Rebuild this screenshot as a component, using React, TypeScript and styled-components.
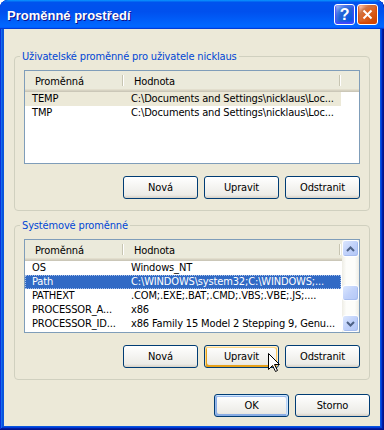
import styled, { createGlobalStyle, css } from 'styled-components';

const GlobalStyle = createGlobalStyle`
  html, body {
    margin: 0;
    padding: 0;
    background: #ffffff;
  }
  body {
    font-family: "DejaVu Sans Condensed", "DejaVu Sans", "Liberation Sans", sans-serif;
    font-stretch: condensed;
    font-size: 11px;
    letter-spacing: -0.15px;
    color: #000;
  }
  * {
    box-sizing: border-box;
  }
`;

const Window = styled.div`
  width: 384px;
  height: 430px;
  display: flex;
  flex-direction: column;
  background: #0855dd;
  border-radius: 8px 8px 0 0;
  box-shadow: inset -1px -1px #00138c, inset 1px 1px #0831d9, inset -2px -2px #001ea0,
    inset 2px 2px #166aee, inset -3px -3px #003bda, inset 3px 3px #0855dd;
  overflow: hidden;
`;

const TitleBar = styled.div`
  height: 29px;
  flex: none;
  display: flex;
  align-items: center;
  gap: 2px;
  padding: 0 6px 0 7px;
  border-radius: 8px 8px 0 0;
  background: linear-gradient(180deg, #0997ff, #0053ee 8%, #0050ee 40%, #06f 88%, #06f 93%, #005bff 95%, #003dd7 96%, #003dd7);
`;

const Title = styled.span`
  flex: 1;
  color: #fff;
  font-family: "Liberation Sans", Arial, sans-serif;
  font-stretch: normal;
  letter-spacing: 0;
  font-weight: bold;
  font-size: 13px;
  text-shadow: 1px 1px #0f1089;
  padding-top: 1px;
`;

const CaptionButton = styled.div<{ $kind: 'help' | 'close' }>`
  width: 21px;
  height: 21px;
  border: 1px solid #fff;
  border-radius: 3px;
  display: flex;
  align-items: center;
  justify-content: center;
  color: #fff;
  font-family: "Liberation Sans", Arial, sans-serif;
  font-weight: bold;
  font-size: 16px;
  ${(p) =>
    p.$kind === 'help'
      ? css`
          background: radial-gradient(circle at 90% 90%, #0054e9 0%, #2263d5 55%, #4479e4 70%, #a3bbec 90%, #fff 100%);
          box-shadow: inset 0 -1px 2px 1px #4646ff;
        `
      : css`
          background: radial-gradient(circle at 90% 90%, #cc4600 0%, #dc6527 55%, #cd7546 70%, #ffccb2 90%, #fff 100%);
          box-shadow: inset 0 -1px 2px 1px #da4600;
        `}
`;

const Body = styled.div`
  flex: 1;
  margin: 0 4px 4px;
  background: #ece9d8;
  padding: 21px 10px 0;
  display: flex;
  flex-direction: column;
`;

const Group = styled.fieldset`
  margin: 0;
  min-width: 0;
  padding: 7px 9px 11px;
  border: 1px solid #d0d0bf;
  border-radius: 4px;

  & + & {
    margin-top: 8px;
  }
`;

const GroupLabel = styled.legend`
  color: #0046d5;
  line-height: 13px;
  padding: 0 2px;
  margin-left: -4px;
`;

const ListView = styled.div`
  height: 94px;
  border: 1px solid #7f9db9;
  background: #fff;
  display: flex;
  overflow: hidden;
`;

const ListMain = styled.div`
  flex: 1;
  min-width: 0;
  display: flex;
  flex-direction: column;
`;

const Header = styled.div`
  height: 21px;
  flex: none;
  display: flex;
  background: #ebeadb;
  box-shadow: inset 0 -1px #cbc7b8, inset 0 -2px #d6d2c2, inset 0 -3px #e2decd;
`;

const HeaderCell = styled.div<{ $w: number }>`
  position: relative;
  width: ${(p) => p.$w}px;
  flex: none;
  padding: 3px 0 0 10px;
  line-height: 15px;
  white-space: nowrap;

  &::after {
    content: '';
    position: absolute;
    right: 1px;
    top: 4px;
    bottom: 6px;
    width: 1px;
    background: #c7c5b2;
    box-shadow: 1px 0 #fff;
  }
`;

const Row = styled.div<{ $sel?: 'focus' | 'blur' }>`
  width: 316px;
  height: 14px;
  flex: none;
  display: flex;
  line-height: 14px;
  ${(p) =>
    p.$sel === 'blur' &&
    css`
      background: #ece9d8;
    `}
  ${(p) =>
    p.$sel === 'focus' &&
    css`
      background: #316ac5;
      color: #fff;
      outline: 1px dotted #a9c0e8;
      outline-offset: -1px;
    `}
`;

const Cell = styled.div<{ $w: number }>`
  width: ${(p) => p.$w}px;
  flex: none;
  padding-left: 7px;
  white-space: nowrap;
  overflow: hidden;
`;

const Scrollbar = styled.div`
  width: 17px;
  flex: none;
  display: flex;
  flex-direction: column;
  background: linear-gradient(90deg, #eeede5, #fdfdfa 25%, #fdfdfa 75%, #eeede5);
`;

const blueKnob = css`
  border: 1px solid #fff;
  border-radius: 3px;
  background: linear-gradient(135deg, #dce7fe, #c0d1fa 50%, #b3c7f6);
  box-shadow: inset -1px -1px #a7bdef;
`;

const ScrollButton = styled.div`
  height: 17px;
  flex: none;
  display: flex;
  align-items: center;
  justify-content: center;
  ${blueKnob}
`;

const ScrollTrack = styled.div`
  flex: 1;
  display: flex;
  flex-direction: column;
`;

const Thumb = styled.div<{ $top: number; $h: number }>`
  margin-top: ${(p) => p.$top}px;
  height: ${(p) => p.$h}px;
  ${blueKnob}
`;

const ButtonRow = styled.div`
  display: flex;
  justify-content: flex-end;
  gap: 6px;
  margin-top: 12px;
`;

const Button = styled.div<{ $state?: 'hover' | 'default' }>`
  position: relative;
  width: 75px;
  height: 23px;
  display: flex;
  align-items: center;
  justify-content: center;
  border: 1px solid #003c74;
  border-radius: 3px;
  background: linear-gradient(180deg, #fff, #ecebe6 86%, #d6d0c5);
  ${(p) =>
    p.$state === 'hover' &&
    css`
      box-shadow: inset -1px 1px #fff0cf, inset 1px 2px #fdd889, inset -2px 2px #fbc761, inset 2px -2px #e5a01a;
    `}
  ${(p) =>
    p.$state === 'default' &&
    css`
      box-shadow: inset -1px 1px #cee7ff, inset 1px 2px #98b8ea, inset -2px 2px #bcd4f6, inset 1px -1px #89ade4,
        inset 2px -2px #89ade4;
    `}
`;

const Footer = styled.div`
  display: flex;
  justify-content: flex-end;
  gap: 6px;
  margin-top: 14px;
`;

const Cursor = styled.svg`
  position: absolute;
  left: 63px;
  top: 7px;
  pointer-events: none;
`;

type Variable = [string, string];

const userVars: Variable[] = [
  ['TEMP', 'C:\\Documents and Settings\\nicklaus\\Loc...'],
  ['TMP', 'C:\\Documents and Settings\\nicklaus\\Loc...'],
];

const systemVars: Variable[] = [
  ['OS', 'Windows_NT'],
  ['Path', 'C:\\WINDOWS\\system32;C:\\WINDOWS;...'],
  ['PATHEXT', '.COM;.EXE;.BAT;.CMD;.VBS;.VBE;.JS;....'],
  ['PROCESSOR_A...', 'x86'],
  ['PROCESSOR_ID...', 'x86 Family 15 Model 2 Stepping 9, Genu...'],
];

const Arrow = ({ up }: { up?: boolean }) => (
  <svg width="9" height="6" viewBox="0 0 9 6">
    <path
      d={up ? 'M1 5 L4.5 1.5 L8 5' : 'M1 1 L4.5 4.5 L8 1'}
      fill="none"
      stroke="#4d6185"
      strokeWidth="2"
    />
  </svg>
);

const VarList = ({ rows, selected, focused, scroll }: any) => (
  <ListView>
    <ListMain>
      <Header>
        <HeaderCell $w={99}>Proměnná</HeaderCell>
        <HeaderCell $w={217}>Hodnota</HeaderCell>
      </Header>
      {rows.map(([name, value]: Variable, i: number) => (
        <Row key={name} $sel={i === selected ? (focused ? 'focus' : 'blur') : undefined}>
          <Cell $w={99}>{name}</Cell>
          <Cell $w={217}>{value}</Cell>
        </Row>
      ))}
    </ListMain>
    {scroll ? (
      <Scrollbar>
        <ScrollButton>
          <Arrow up />
        </ScrollButton>
        <ScrollTrack>
          <Thumb $top={28} $h={16} />
        </ScrollTrack>
        <ScrollButton>
          <Arrow />
        </ScrollButton>
      </Scrollbar>
    ) : null}
  </ListView>
);

const App = () => {
  return (
    <Window>
      <GlobalStyle />
      <TitleBar>
        <Title>Proměnné prostředí</Title>
        <CaptionButton $kind="help">?</CaptionButton>
        <CaptionButton $kind="close">
          <svg width="11" height="11" viewBox="0 0 11 11">
            <path d="M1.5 1.5 L9.5 9.5 M9.5 1.5 L1.5 9.5" stroke="#fff" strokeWidth="2" />
          </svg>
        </CaptionButton>
      </TitleBar>
      <Body>
        <Group>
          <GroupLabel>Uživatelské proměnné pro uživatele nicklaus</GroupLabel>
          <VarList rows={userVars} selected={0} />
          <ButtonRow>
            <Button>Nová</Button>
            <Button>Upravit</Button>
            <Button>Odstranit</Button>
          </ButtonRow>
        </Group>
        <Group>
          <GroupLabel>Systémové proměnné</GroupLabel>
          <VarList rows={systemVars} selected={1} focused scroll />
          <ButtonRow>
            <Button>Nová</Button>
            <Button $state="hover">
              Upravit
              <Cursor width="13" height="20" viewBox="0 0 13 20">
                <path
                  d="M0.5 0.5 V16.5 L4.5 12.5 L7.5 18.5 L9.5 17.5 L6.5 11.5 H11.5 Z"
                  fill="#fff"
                  stroke="#000"
                  strokeWidth="1"
                />
              </Cursor>
            </Button>
            <Button>Odstranit</Button>
          </ButtonRow>
        </Group>
        <Footer>
          <Button $state="default">OK</Button>
          <Button>Storno</Button>
        </Footer>
      </Body>
    </Window>
  );
};

export default App;
